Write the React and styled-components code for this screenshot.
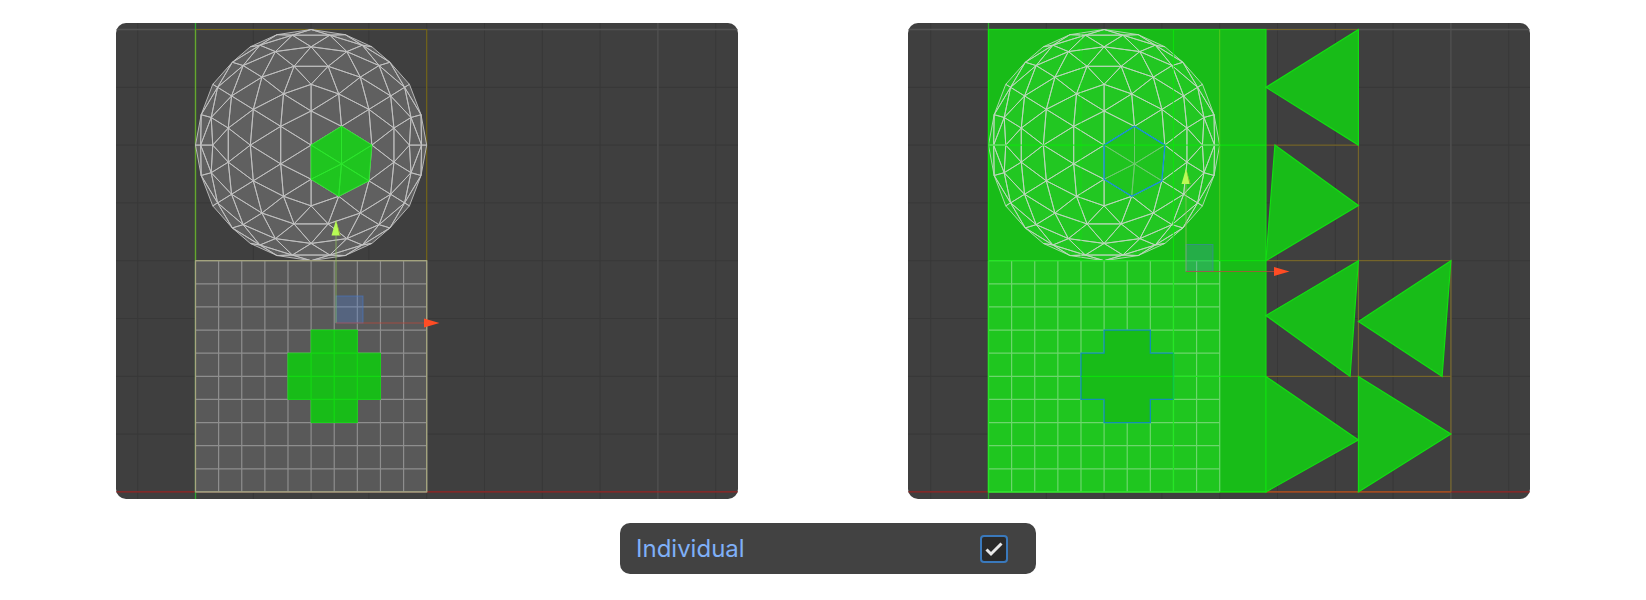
import React, { useState } from "react";
import styled, { createGlobalStyle } from "styled-components";

const GlobalStyle = createGlobalStyle`
  body {
    margin: 0;
    background: #ffffff;
    font-family: Inter, "Liberation Sans", sans-serif;
  }
`;

const Page = styled.main`
  display: flex;
  flex-direction: column;
  gap: 24px;
  padding: 23px 0 26px;
`;

const Viewports = styled.div`
  display: grid;
  grid-template-columns: 1fr 1fr;
  gap: 170px;
  padding: 0 116px;
`;

const Viewport = styled.figure`
  margin: 0;
  overflow: hidden;
  border-radius: 10px;
  background: #3f3f3f;
`;

const Canvas = styled.svg`
  display: block;
  width: 100%;
  height: auto;
`;

const Footer = styled.div`
  display: flex;
  justify-content: center;
  padding-left: 10px;
`;

const Option = styled.label`
  display: flex;
  align-items: center;
  justify-content: space-between;
  box-sizing: border-box;
  width: 416px;
  max-width: 100%;
  min-height: 51px;
  padding: 10px 28px 10px 16px;
  border-radius: 10px;
  background: #424242;
  color: #7fb0f8;
  font-size: 24px;
  line-height: 30px;
`;

const CheckHolder = styled.span`
  display: grid;
  width: 28px;
  height: 28px;

  > * {
    grid-area: 1 / 1;
  }
`;

const Checkbox = styled.input`
  appearance: none;
  width: 28px;
  height: 28px;
  margin: 0;
  border: 2px solid #3a79bc;
  border-radius: 4px;
  background: #2a2a2a;
`;

const CheckMark = styled.svg`
  z-index: 1;
  pointer-events: none;
  visibility: ${(p) => (p.$on ? "visible" : "hidden")};
`;

const GRID = 57.8;
const TILE = GRID * 4;
const CELL = TILE / 10;
const TOP = 6.5;
const MID = TOP + TILE;
const BASE = MID + TILE;
const COL = CELL * 4;

/* Icosphere with every face split four ways, looking down a two-fold axis. */
function buildIcosphere(radius) {
  const phi = (1 + Math.sqrt(5)) / 2;
  const base = [];
  for (const a of [-1, 1]) {
    for (const b of [-phi, phi]) {
      base.push([a, b, 0], [0, a, b], [b, 0, a]);
    }
  }
  const near = (p, q) =>
    Math.abs(Math.hypot(p[0] - q[0], p[1] - q[1], p[2] - q[2]) - 2) < 0.01;
  const n = 4;
  const triangles = [];
  for (let i = 0; i < 12; i++)
    for (let j = i + 1; j < 12; j++)
      for (let k = j + 1; k < 12; k++) {
        const [A, B, C] = [base[i], base[j], base[k]];
        if (!near(A, B) || !near(B, C) || !near(A, C)) continue;
        const at = (u, v) => {
          const p = [0, 1, 2].map(
            (d) => (A[d] * (n - u - v) + B[d] * u + C[d] * v) / n
          );
          const len = Math.hypot(...p);
          return p.map((c) => (c / len) * radius);
        };
        for (let u = 0; u < n; u++)
          for (let v = 0; v < n - u; v++) {
            triangles.push([at(u, v), at(u + 1, v), at(u, v + 1)]);
            if (u + v < n - 1)
              triangles.push([at(u + 1, v), at(u + 1, v + 1), at(u, v + 1)]);
          }
      }
  return triangles.filter(([p, q, r]) => {
    const cross =
      (q[0] - p[0]) * (r[1] - p[1]) - (q[1] - p[1]) * (r[0] - p[0]);
    const e = [q[0] - p[0], q[1] - p[1], q[2] - p[2]];
    const f = [r[0] - p[0], r[1] - p[1], r[2] - p[2]];
    const normal = [
      e[1] * f[2] - e[2] * f[1],
      e[2] * f[0] - e[0] * f[2],
      cross,
    ];
    const outward =
      normal[0] * p[0] + normal[1] * p[1] + normal[2] * p[2] > 0 ? 1 : -1;
    return cross * outward > 0.001;
  });
}

const RADIUS = TILE / 2;
const sphere = buildIcosphere(RADIUS);
const hubX = 0.2628 * RADIUS;
const hubY = 0.1624 * RADIUS;
const isHub = (p) => Math.hypot(p[0] - hubX, p[1] - hubY) < 1 && p[2] > 0;
const hexTriangles = sphere.filter((t) => t.some(isHub));
const hexRing = hexTriangles
  .flat()
  .filter((p) => !isHub(p))
  .filter(
    (p, i, all) =>
      all.findIndex((q) => Math.hypot(p[0] - q[0], p[1] - q[1]) < 0.5) === i
  )
  .sort(
    (p, q) =>
      Math.atan2(p[1] - hubY, p[0] - hubX) -
      Math.atan2(q[1] - hubY, q[0] - hubX)
  );

const trace = (points) =>
  "M" + points.map((p) => `${p[0].toFixed(2)} ${p[1].toFixed(2)}`).join("L") + "Z";
const rest = (list) => list.filter((t) => !hexTriangles.includes(t));
const spherePath = rest(sphere).map(trace).join("");
const hexPath = hexTriangles.map(trace).join("");
const hexOutline = trace(hexRing);

const steps = (count) => Array.from({ length: count }, (_, i) => i);
const meshLines = steps(11)
  .map((i) => `M${i * CELL} 0V${TILE}M0 ${i * CELL}H${TILE}`)
  .join("");
const c = (n) => n * CELL;
const crossOutline = `M${c(5)} ${c(3)}H${c(7)}V${c(4)}H${c(8)}V${c(6)}H${c(7)}V${c(7)}H${c(5)}V${c(6)}H${c(4)}V${c(4)}H${c(5)}Z`;
const crossLines = `M${c(6)} ${c(3)}V${c(7)}M${c(4)} ${c(5)}H${c(8)}M${c(5)} ${c(4)}V${c(6)}M${c(7)} ${c(4)}V${c(6)}M${c(5)} ${c(4)}H${c(7)}M${c(5)} ${c(6)}H${c(7)}`;

const BackGrid = () => (
  <g fill="none">
    <path
      stroke="#383838"
      d={
        steps(11).map((i) => `M${(i - 1) * GRID} 0V476`).join("") +
        steps(9).map((i) => `M-90 ${TOP + i * GRID}H560`).join("")
      }
    />
    <path stroke="#535353" strokeWidth="1.3" d={`M${GRID * 8} 0V476M-90 ${TOP}H560`} />
    <path stroke="#9a2424" strokeWidth="1.3" d={`M-90 ${BASE}H560`} />
    <path stroke="#2fa52f" strokeWidth="1.3" d="M0 0V476" />
  </g>
);

const Gizmo = ({ x, y, tint }) => (
  <g transform={`translate(${x} ${y})`}>
    <rect width="27" height="27" y="-27" fill="#4b7ed6" fillOpacity={tint} stroke="#4678c8" strokeOpacity={tint * 2} />
    <path d="M0 0V-88" stroke="#8fbd5c" strokeOpacity="0.75" />
    <path d="M0 0H88" stroke="#b8493b" strokeOpacity="0.75" />
    <path d="M0 -103L4.5 -87.5H-4.5Z" fill="#b7fb55" />
    <path d="M0 -103L4.5 -87.5H3.5Z" fill="#86962f" />
    <path d="M103.5 0L88 4.5V-4.5Z" fill="#ff4c24" />
  </g>
);

const Original = () => (
  <Canvas viewBox="0 0 622 476" role="img" aria-label="Mesh islands with selected faces">
    <g transform="translate(79.5 0)">
      <BackGrid />
      <path d={`M0 ${TOP}H${TILE}V${MID}`} fill="none" stroke="#75671a" strokeWidth="1.2" />
      <path d={`M0 ${TOP}V${MID}`} stroke="#69a52d" strokeWidth="1.2" />
      <g transform={`translate(${RADIUS} ${TOP + RADIUS})`} strokeLinejoin="round">
        <path d={spherePath} fill="#606060" stroke="#c2c2c2" strokeWidth="0.9" />
        <path d={hexPath} fill="#1fc51f" stroke="#2ce52c" strokeWidth="0.9" />
      </g>
      <g transform={`translate(0 ${MID})`} fill="none">
        <rect width={TILE} height={TILE} fill="#595959" />
        <path d={meshLines} stroke="#8e8e8e" strokeWidth="1.2" />
        <rect width={TILE} height={TILE} stroke="#a6a67d" strokeWidth="1.2" />
        <path d={crossOutline} fill="#18bc18" stroke="#18d218" />
        <path d={crossLines} stroke="#13d813" strokeWidth="1.2" />
      </g>
      <Gizmo x={140.5} y={300} tint={0.3} />
    </g>
  </Canvas>
);

const looseTriangles = [
  `M${COL * 4} ${TOP}L${COL * 3} ${TOP + GRID}L${COL * 4} ${TOP + GRID * 2}Z`,
  `M286.4 122.1L${COL * 4} 182.5L${COL * 3} ${MID}Z`,
  `M${COL * 4} ${MID}L${COL * 3} 292.5L361.6 353.5Z`,
  `M${COL * 5} ${MID}L${COL * 4} 298.5L453.6 353.5Z`,
  `M${COL * 3} 353.5L${COL * 4} 417L${COL * 3} ${BASE}Z`,
  `M${COL * 4} 353.5L${COL * 5} 411L${COL * 4} ${BASE}Z`,
].join("");

const Packed = () => {
  const quarter = TOP + GRID * 2;
  const lower = MID + GRID * 2;
  return (
    <Canvas viewBox="0 0 622 476" role="img" aria-label="Faces unwrapped individually">
      <g transform="translate(80.5 0)" fill="none">
        <BackGrid />
        <path
          stroke="#75652a"
          strokeWidth="1.2"
          d={`M${COL * 3} ${TOP}H${COL * 4}V${lower}M${COL * 3} ${quarter}H${COL * 4}M${COL * 3} ${MID}H${COL * 5}V${BASE}M${COL * 3} ${lower}H${COL * 5}`}
        />
        <path stroke="#a85a20" strokeWidth="1.3" d={`M${COL * 3} ${BASE}H${COL * 5}`} />
        <rect y={TOP} width={COL * 3} height={TILE * 2} fill="#18bc18" stroke="#14dc14" strokeWidth="1.2" />
        <path d={looseTriangles} fill="#18bc18" stroke="#12de12" strokeWidth="1.2" />
        <g transform={`translate(${RADIUS} ${TOP + RADIUS})`} strokeLinejoin="round">
          <path d={spherePath} fill="#22c722" stroke="#bcd8bc" strokeWidth="0.9" />
          <path d={hexPath} fill="#1fc41f" stroke="#6fca6f" strokeWidth="0.9" />
          <path d={hexOutline} stroke="#148ade" strokeWidth="1.3" />
        </g>
        <g transform={`translate(0 ${MID})`}>
          <rect width={TILE} height={TILE} fill="#1fc61f" />
          <path d={meshLines} stroke="#6cd66c" strokeWidth="1.2" />
          <path d={crossOutline} fill="#18bc18" stroke="#118fb4" strokeWidth="1.3" />
        </g>
        <path d={`M${TILE} ${TOP}V${MID}`} stroke="#55ca1c" />
        <path
          stroke="#09ec09"
          strokeWidth="1.2"
          strokeOpacity="0.7"
          d={`M${COL * 2} ${TOP}V${BASE}M0 ${quarter}H${COL * 3}M0 ${MID}H${COL * 3}M${COL} ${lower}H${COL * 3}M0 ${TOP}V${BASE}H${COL * 3}`}
        />
        <path stroke="#09ec09" strokeOpacity="0.5" d={`M${COL} ${TOP}V${MID}`} />
        <Gizmo x={197.5} y={248.5} tint={0.25} />
      </g>
    </Canvas>
  );
};

export default function App() {
  const [individual, setIndividual] = useState(true);
  return (
    <>
      <GlobalStyle />
      <Page>
        <Viewports>
          <Viewport>
            <Original />
          </Viewport>
          <Viewport>
            <Packed />
          </Viewport>
        </Viewports>
        <Footer>
          <Option htmlFor="individual">
            Individual
            <CheckHolder>
              <Checkbox
                id="individual"
                type="checkbox"
                checked={individual}
                onChange={(e) => setIndividual(e.target.checked)}
              />
              <CheckMark $on={individual} width="28" height="28" viewBox="0 0 28 28" aria-hidden="true">
                <path d="M6.5 14.5L11 19L21.5 8.5" fill="none" stroke="#e8e8e8" strokeWidth="3" />
              </CheckMark>
            </CheckHolder>
          </Option>
        </Footer>
      </Page>
    </>
  );
}
